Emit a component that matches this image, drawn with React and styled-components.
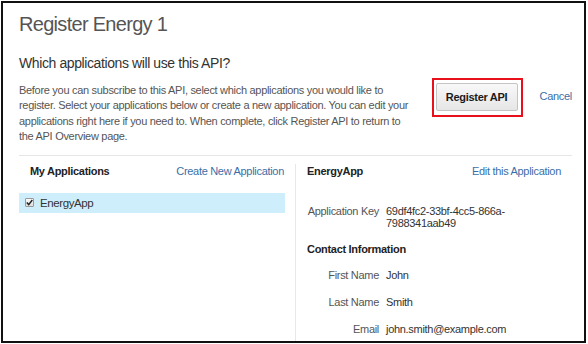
import React from 'react';
import styled, { createGlobalStyle } from 'styled-components';

const GlobalStyle = createGlobalStyle`
  body {
    margin: 0;
    background: #fff;
    font-family: "Liberation Sans", Arial, sans-serif;
  }
`;

const Frame = styled.div`
  box-sizing: border-box;
  width: 585px;
  height: 342px;
  margin: 1px 0 0 1px;
  border: 2px solid #111;
  padding: 0 12px 0 16px;
  display: flex;
  flex-direction: column;
  overflow: hidden;
`;

const Title = styled.h1`
  margin: 9px 0 0;
  font-size: 20px;
  line-height: 24px;
  font-weight: 400;
  letter-spacing: -0.7px;
  color: #555;
`;

const Heading = styled.h2`
  margin: 19px 0 0;
  font-size: 14px;
  line-height: 17px;
  font-weight: 400;
  letter-spacing: -0.4px;
  color: #333;
`;

const IntroRow = styled.div`
  display: flex;
  align-items: flex-start;
  margin-top: 6px;
`;

const Intro = styled.p`
  margin: 5px 0 0;
  width: 396px;
  font-size: 11px;
  line-height: 15.3px;
  letter-spacing: -0.3px;
  color: #555;
`;

const Actions = styled.div`
  margin-left: auto;
  display: flex;
  align-items: center;
  gap: 17px;
`;

const Highlight = styled.div`
  border: 2px solid #e8101a;
  padding: 3px 3px 4px 2px;
`;

const Button = styled.button`
  width: 82px;
  height: 28px;
  padding: 0;
  border: 1px solid #c4c4c4;
  border-radius: 2px;
  background: linear-gradient(#f8f8f8, #e6e6e6);
  font-family: inherit;
  font-size: 11px;
  font-weight: 700;
  letter-spacing: -0.3px;
  color: #1a1a1a;
  cursor: pointer;
`;

const Link = styled.a`
  font-size: 11px;
  line-height: 15px;
  letter-spacing: -0.3px;
  color: #3b6ea8;
  text-decoration: none;
  cursor: pointer;
  margin-bottom: ${({ $raise }) => ($raise ? '2px' : '0')};
`;

const Divider = styled.hr`
  margin: 11px 0 0;
  border: 0;
  border-top: 1px solid #e6e6e6;
`;

const Columns = styled.div`
  flex: 1;
  display: flex;
  gap: 10px;
  padding-top: 8px;
`;

const LeftCol = styled.section`
  width: 266px;
`;

const RightCol = styled.section`
  flex: 1;
  border-left: 1px solid #e8e8e8;
  padding: 0 11px;
`;

const ColHeader = styled.div`
  display: flex;
  justify-content: space-between;
  align-items: baseline;
  line-height: 15px;
  padding: ${({ $inset }) => ($inset ? '0 1px 0 11px' : '0')};
`;

const Strong = styled.span`
  font-size: 11px;
  font-weight: 700;
  letter-spacing: -0.3px;
  color: #222;
`;

const AppRow = styled.label`
  display: flex;
  align-items: center;
  gap: 6px;
  height: 20px;
  margin-top: 13.5px;
  padding-left: 6px;
  background: ${({ $selected }) => ($selected ? '#cdeefa' : 'transparent')};
  font-size: 11.5px;
  letter-spacing: -0.4px;
  color: #333;
`;

const Check = styled.span`
  box-sizing: border-box;
  width: 9px;
  height: 9px;
  border: 1px solid #999;
  border-radius: 1px;
  background: linear-gradient(#fcfcfc, #dedede);
  display: flex;
  align-items: center;
  justify-content: center;
`;

const SectionTitle = styled(Strong)`
  display: block;
  margin-top: 13px;
  line-height: 15px;
`;

const Field = styled.div`
  display: grid;
  grid-template-columns: 72px 1fr;
  column-gap: 7px;
  margin-top: ${({ $gap }) => $gap}px;
  font-size: 11px;
  line-height: ${({ $tight }) => ($tight ? '12px' : '15px')};
  letter-spacing: -0.3px;
`;

const Label = styled.span`
  text-align: right;
  color: #555;
`;

const Value = styled.span`
  color: #333;
`;

const contact = [
  ['First Name', 'John'],
  ['Last Name', 'Smith'],
  ['Email', 'john.smith@example.com'],
];

export default function App() {
  return (
    <>
      <GlobalStyle />
      <Frame>
        <Title>Register Energy 1</Title>
        <Heading>Which applications will use this API?</Heading>
        <IntroRow>
          <Intro>
            Before you can subscribe to this API, select which applications you would like to
            register. Select your applications below or create a new application. You can edit your
            applications right here if you need to. When complete, click Register API to return to
            the API Overview page.
          </Intro>
          <Actions>
            <Highlight>
              <Button type="button">Register API</Button>
            </Highlight>
            <Link $raise>Cancel</Link>
          </Actions>
        </IntroRow>
        <Divider />
        <Columns>
          <LeftCol>
            <ColHeader $inset>
              <Strong>My Applications</Strong>
              <Link>Create New Application</Link>
            </ColHeader>
            <AppRow $selected>
              <Check>
                <svg width="7" height="7" viewBox="0 0 7 7">
                  <path d="M0.8 3.6 L2.7 5.6 L6.3 1" fill="none" stroke="#222" strokeWidth="1.5" />
                </svg>
              </Check>
              EnergyApp
            </AppRow>
          </LeftCol>
          <RightCol>
            <ColHeader>
              <Strong>EnergyApp</Strong>
              <Link>Edit this Application</Link>
            </ColHeader>
            <Field $gap={25.5} $tight>
              <Label>Application Key</Label>
              <Value>
                69df4fc2-33bf-4cc5-866a-
                <br />
                7988341aab49
              </Value>
            </Field>
            <SectionTitle>Contact Information</SectionTitle>
            {contact.map(([label, value], i) => (
              <Field key={label} $gap={i === 0 ? 11.6 : 11.7}>
                <Label>{label}</Label>
                <Value>{value}</Value>
              </Field>
            ))}
          </RightCol>
        </Columns>
      </Frame>
    </>
  );
}
